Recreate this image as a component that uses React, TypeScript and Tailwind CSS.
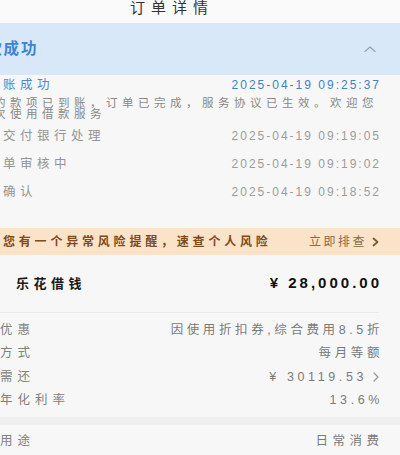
import React from 'react';

const steps = [
  { label: '已交付银行处理', time: '2025-04-19 09:19:05' },
  { label: '订单审核中', time: '2025-04-19 09:19:02' },
  { label: '待确认', time: '2025-04-19 09:18:52' },
];

const details = [
  { label: '享受优惠', value: '因使用折扣券,综合费用8.5折' },
  { label: '还款方式', value: '每月等额' },
  { label: '合计需还', value: '¥ 30119.53', arrow: true },
  { label: '参考年化利率', value: '13.6%' },
];

const Chevron: React.FC<{ className?: string; d: string; w: number; h: number; sw?: number }> = ({ className, d, w, h, sw = 1.5 }) => (
  <svg className={className} width={w} height={h} viewBox={`0 0 ${w} ${h}`} fill="none" stroke="currentColor" strokeWidth={sw} strokeLinecap="round" strokeLinejoin="round">
    <path d={d} />
  </svg>
);

export default function App() {
  return (
    <div className="w-[400px] h-[455px] overflow-hidden bg-[#f7f7f7] font-['Liberation_Sans','Noto_Sans_CJK_SC',sans-serif]">
      {/* 标题栏 */}
      <div className="h-[23px] bg-[#fafafa] flex justify-center pr-[56px]">
        <span className="text-[15px] leading-[15px] tracking-[6px] text-[#333]">订单详情</span>
      </div>

      {/* 状态 */}
      <div className="h-[52px] bg-[#d9e8f8] flex items-center justify-between pr-[24px]">
        <span className="-ml-[31px] text-[15.5px] font-bold tracking-[1.8px] text-[#3b84d4]">放款成功</span>
        <Chevron className="text-[#8ea3bc]" w={12} h={6} sw={1.2} d="M1 5.5L6 1l5 4.5" />
      </div>

      {/* 进度 */}
      <div className="pr-[21px] pb-[22px]">
        <div className="h-[20px] flex items-center justify-between">
          <span className="-ml-[14px] text-[12.5px] tracking-[4.5px] text-[#4a8bd0]">到账成功</span>
          <span className="text-[12px] font-medium tracking-[2px] -mr-[2px] text-[#3f82c8]">2025-04-19 09:25:37</span>
        </div>
        <p className="-ml-[22px] -mr-[8px] mt-[3px] text-[11.5px] leading-[11px] tracking-[4.5px] text-[#888]">
          您的款项已到账，订单已完成，服务协议已生效。欢迎您再次使用借款服务
        </p>
        <div className="mt-[2px]">
          {steps.map((s) => (
            <div key={s.time} className="h-[28px] flex items-center justify-between">
              <span className="-ml-[14px] text-[12.5px] tracking-[4.5px] text-[#949494]">{s.label}</span>
              <span className="text-[12px] tracking-[2px] -mr-[2px] text-[#9c9c9c]">{s.time}</span>
            </div>
          ))}
        </div>
      </div>

      {/* 风险提醒 */}
      <div className="h-[27px] bg-[#fbe3c9] flex items-center justify-between pl-[3px] pr-[21px]">
        <span className="text-[12px] font-semibold tracking-[3.8px] text-[#7d4b1e]">您有一个异常风险提醒，速查个人风险</span>
        <span className="flex items-center gap-[5px] text-[12px] tracking-[2.5px] text-[#8a6945]">
          立即排查
          <Chevron className="text-[#7d5a36]" w={7} h={10} sw={1.8} d="M1.5 1.5L5.5 5l-4 3.5" />
        </span>
      </div>

      {/* 借款信息 */}
      <div className="pr-[21px]">
        <div className="h-[58px] flex items-center justify-between pl-[16px] border-b border-[#ebebeb]">
          <span className="text-[13px] font-bold tracking-[4.5px] text-[#1a1a1a]">乐花借钱</span>
          <span className="text-[15px] font-bold tracking-[3px] -mr-[3px] text-[#111]">¥ 28,000.00</span>
        </div>
        <div className="pt-[5.5px] pb-[4px]">
          {details.map((d) => (
            <div key={d.label} className="h-[23.5px] flex items-center justify-between">
              <span className="-ml-[35px] text-[12.5px] tracking-[5px] text-[#808080]">{d.label}</span>
              <span className="flex items-center gap-[6px] text-[12.5px] tracking-[3.6px] -mr-[4px] text-[#7a7a7a]">
                {d.value}
                {d.arrow && <Chevron className="text-[#9a9a9a] mr-[4px]" w={6} h={10} sw={1.2} d="M1 1l4 4-4 4" />}
              </span>
            </div>
          ))}
        </div>
      </div>

      <div className="h-[8px] bg-[#efefef]" />

      <div className="h-[34px] flex items-center justify-between pr-[21px]">
        <span className="-ml-[35px] text-[12.5px] tracking-[5px] text-[#808080]">借款用途</span>
        <span className="text-[12.5px] tracking-[4.5px] -mr-[4.5px] text-[#7a7a7a]">日常消费</span>
      </div>
    </div>
  );
}
